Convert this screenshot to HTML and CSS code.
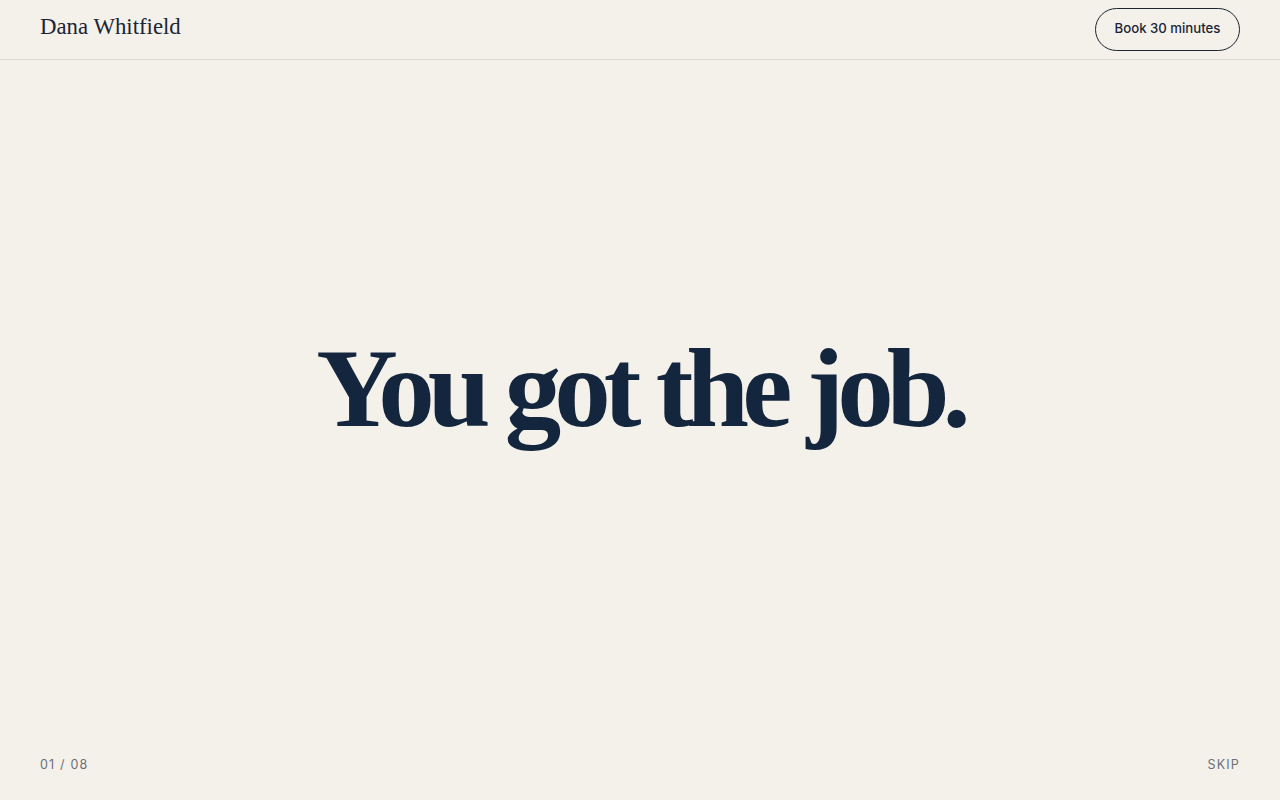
FILE: index.html
```html
<!DOCTYPE html>
<html lang="en">
<head>
<meta charset="utf-8">
<title>Dana Whitfield</title>
<link rel="stylesheet" href="styles.css">
</head>
<body>
<div class="page">
  <header class="topbar">
    <div class="brand">Dana Whitfield</div>
    <a class="book" href="#">Book 30 minutes</a>
  </header>
  <main class="stage">
    <h1 class="headline">You got the job.</h1>
  </main>
  <footer class="bottombar">
    <span class="counter">01 / 08</span>
    <span class="skip">SKIP</span>
  </footer>
</div>
</body>
</html>
```
FILE: styles.css
```css
* { box-sizing: border-box; }
html, body { margin: 0; padding: 0; }
body {
  background: #f4f0ea;
  color: #14263d;
  font-family: "Liberation Sans", Arial, sans-serif;
}
.page {
  height: 800px;
  display: flex;
  flex-direction: column;
}
.topbar {
  height: 60px;
  border-bottom: 1px solid #dcd8d1;
  display: flex;
  align-items: center;
  justify-content: space-between;
  padding: 0 40px;
}
.brand {
  font-family: "Liberation Serif", "Times New Roman", serif;
  font-size: 22.8px;
  color: #1a2535;
  margin-top: -6px;
}
.book {
  display: flex;
  align-items: center;
  justify-content: center;
  height: 43px;
  width: 145px;
  padding-bottom: 3px;
  border: 1px solid #1d2530;
  border-radius: 22px;
  font-family: "Inter", "Liberation Sans", sans-serif;
  font-size: 13.2px;
  font-weight: 500;
  color: #1a2535;
  text-decoration: none;
}
.stage {
  flex: 1;
  display: flex;
  align-items: center;
  justify-content: center;
}
.headline {
  margin: 0;
  margin-top: -14px;
  font-family: "Liberation Serif", "Times New Roman", serif;
  font-weight: 700;
  font-size: 113px;
  letter-spacing: -7px;
  word-spacing: 0;
  color: #14263d;
  line-height: 1;
}
.bottombar {
  height: 72px;
  display: flex;
  justify-content: space-between;
  align-items: flex-start;
  padding: 0 40px;
  padding-top: 29px;
  font-family: "Inter", "Liberation Sans", sans-serif;
  font-size: 12.5px;
  letter-spacing: 1.2px;
  color: #6b7078;
}
```
